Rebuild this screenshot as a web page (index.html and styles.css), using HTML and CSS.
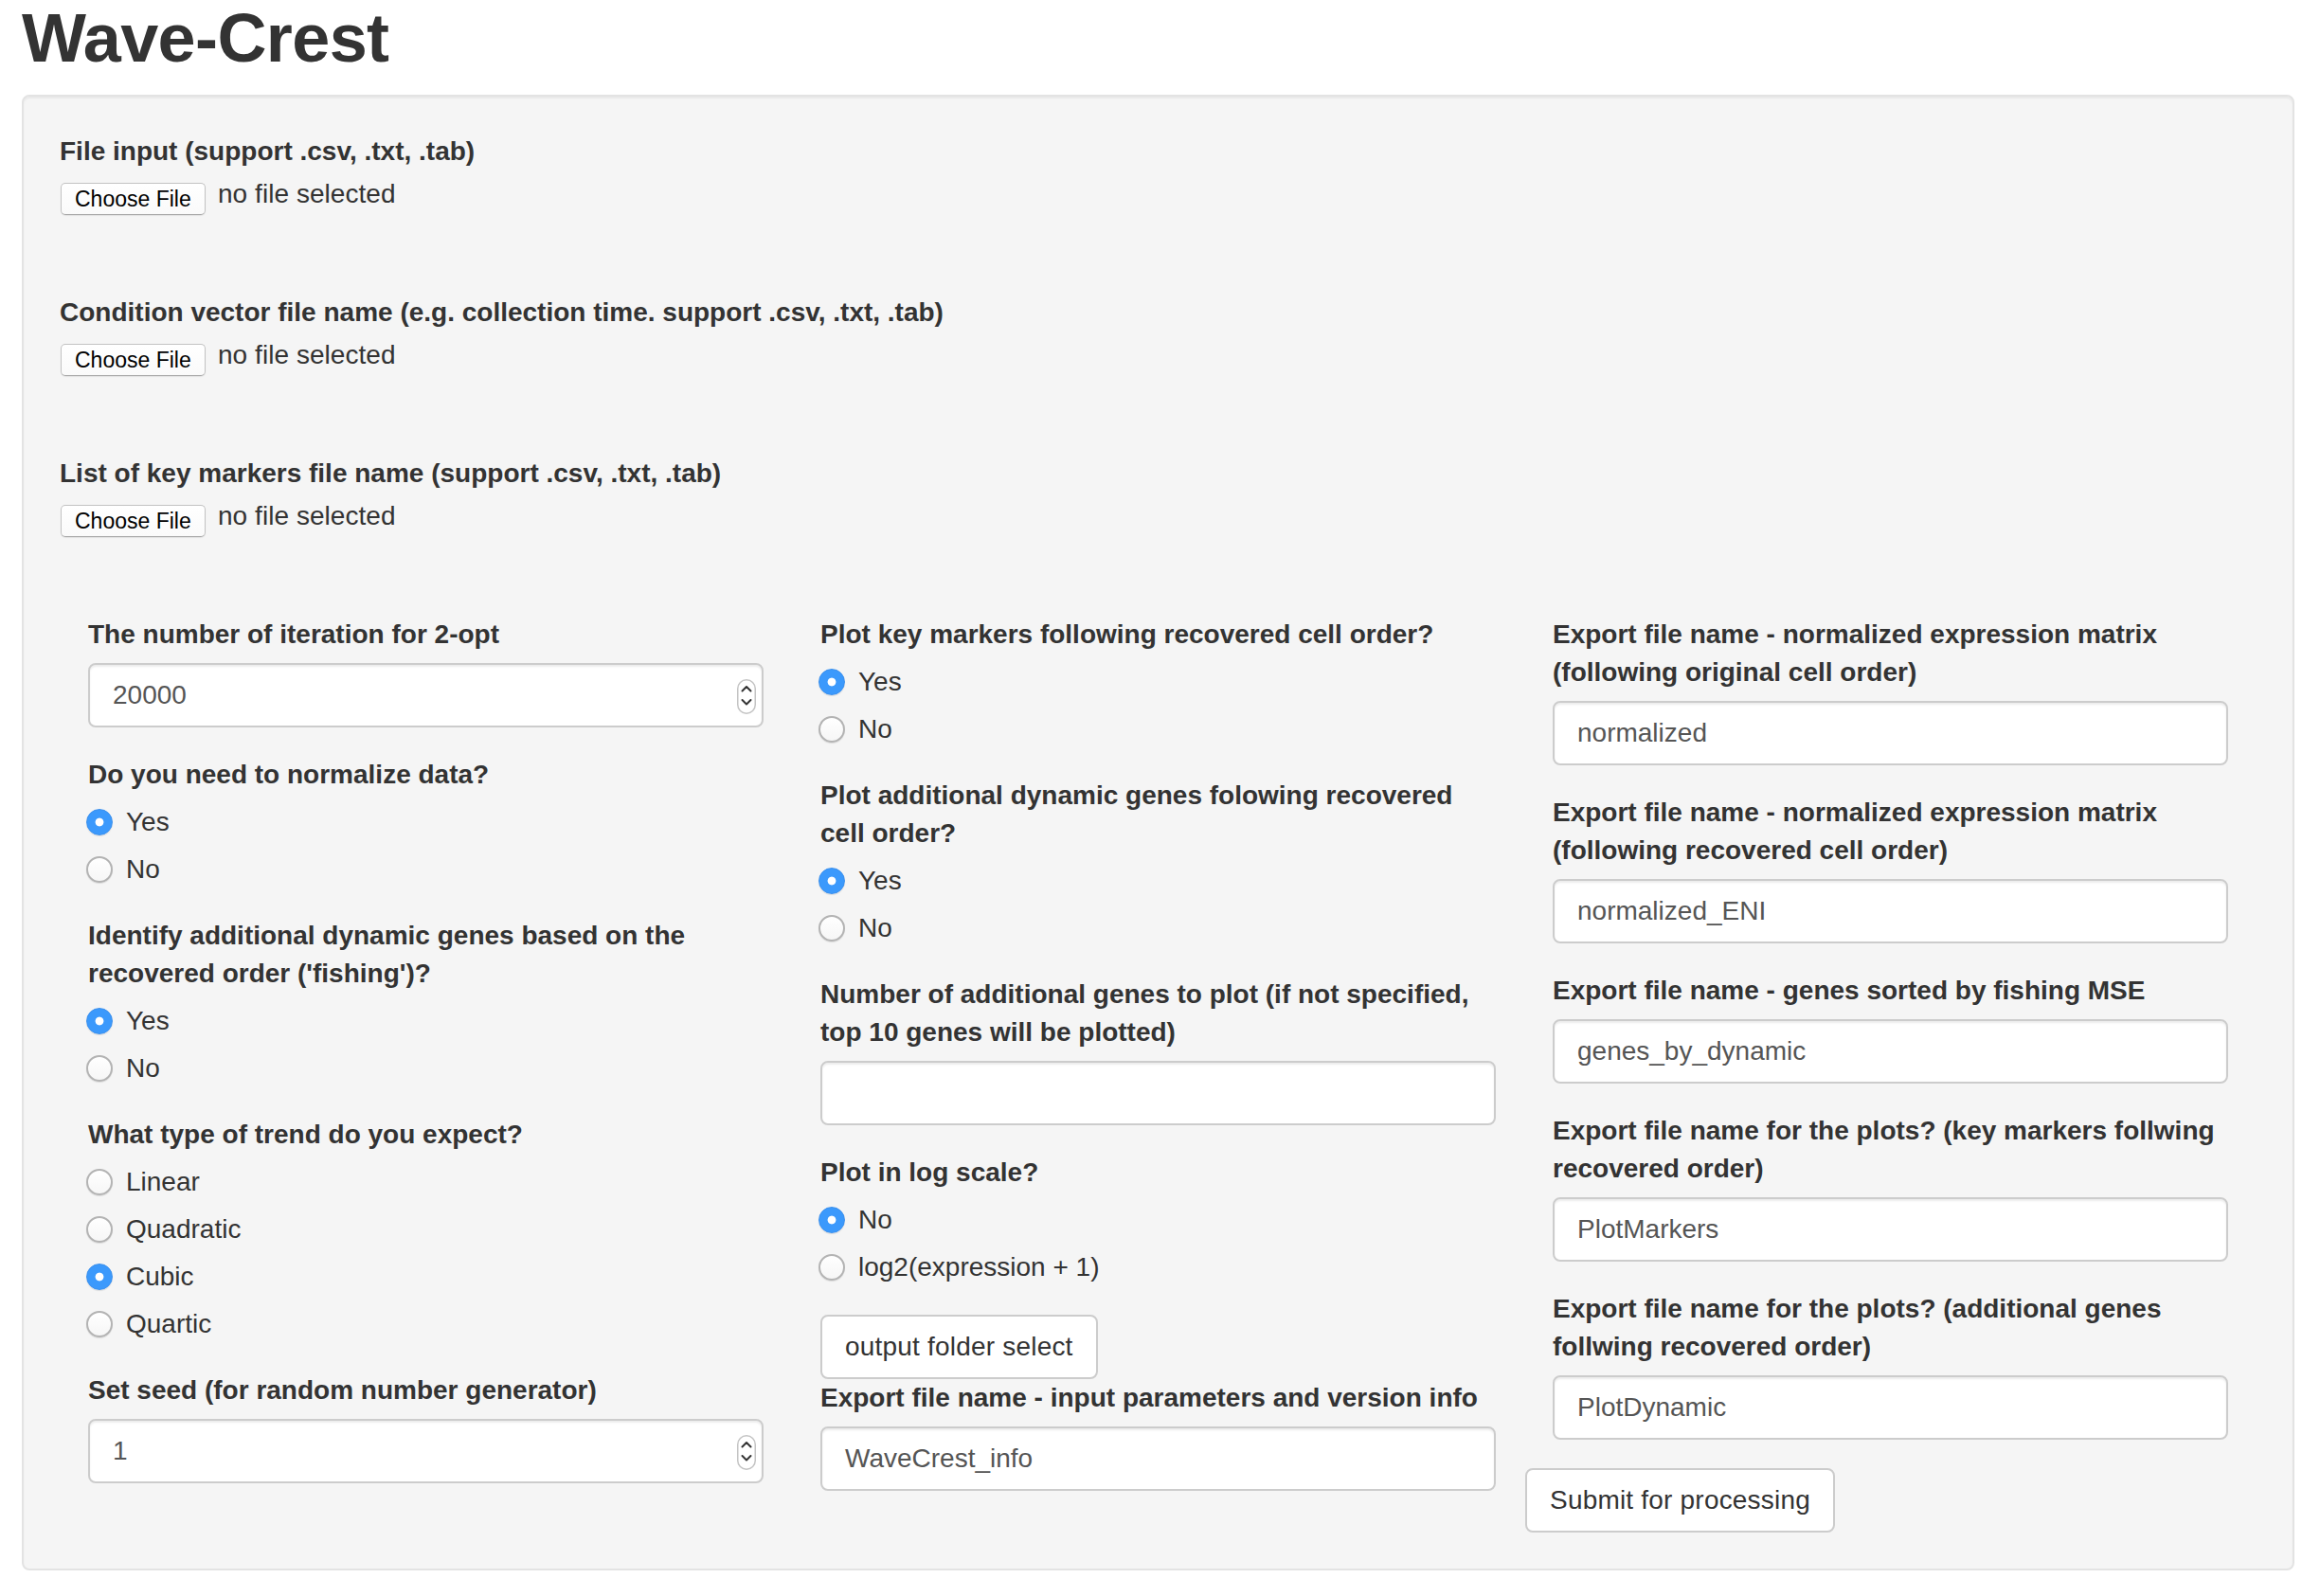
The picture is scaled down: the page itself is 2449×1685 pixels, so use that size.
FILE: index.html
```html
<!DOCTYPE html>
<html lang="en">
<head>
<meta charset="utf-8">
<title>Wave-Crest</title>
<link rel="stylesheet" href="styles.css">
</head>
<body>
<div class="page">
  <h1 class="title">Wave-Crest</h1>
  <form class="well">
    <div class="file-group">
      <label class="control-label">File input (support .csv, .txt, .tab)</label>
      <div class="file-row"><span class="file-btn">Choose File</span><span class="file-status">no file selected</span></div>
    </div>
    <div class="file-group">
      <label class="control-label">Condition vector file name (e.g. collection time. support .csv, .txt, .tab)</label>
      <div class="file-row"><span class="file-btn">Choose File</span><span class="file-status">no file selected</span></div>
    </div>
    <div class="file-group">
      <label class="control-label">List of key markers file name (support .csv, .txt, .tab)</label>
      <div class="file-row"><span class="file-btn">Choose File</span><span class="file-status">no file selected</span></div>
    </div>

    <div class="columns">
      <div class="col">
        <div class="form-group">
          <label class="control-label">The number of iteration for 2-opt</label>
          <div class="form-control number"><span>20000</span><span class="spinner"><svg width="20" height="37" viewBox="0 0 20 37"><rect x="0.75" y="0.75" width="18.5" height="35.5" rx="9.25" fill="#fff" stroke="#c4c4c4" stroke-width="1.5"/><polyline points="5.5,12.5 10,8 14.5,12.5" fill="none" stroke="#333" stroke-width="2" stroke-linecap="round" stroke-linejoin="round"/><polyline points="5.5,22 10,26.5 14.5,22" fill="none" stroke="#333" stroke-width="2" stroke-linecap="round" stroke-linejoin="round"/></svg></span></div>
        </div>
        <div class="form-group">
          <label class="control-label">Do you need to normalize data?</label>
          <div class="options">
            <div class="radio"><span class="dot checked"></span><span>Yes</span></div>
            <div class="radio"><span class="dot"></span><span>No</span></div>
          </div>
        </div>
        <div class="form-group">
          <label class="control-label">Identify additional dynamic genes based on the recovered order ('fishing')?</label>
          <div class="options">
            <div class="radio"><span class="dot checked"></span><span>Yes</span></div>
            <div class="radio"><span class="dot"></span><span>No</span></div>
          </div>
        </div>
        <div class="form-group">
          <label class="control-label">What type of trend do you expect?</label>
          <div class="options">
            <div class="radio"><span class="dot"></span><span>Linear</span></div>
            <div class="radio"><span class="dot"></span><span>Quadratic</span></div>
            <div class="radio"><span class="dot checked"></span><span>Cubic</span></div>
            <div class="radio"><span class="dot"></span><span>Quartic</span></div>
          </div>
        </div>
        <div class="form-group">
          <label class="control-label">Set seed (for random number generator)</label>
          <div class="form-control number"><span>1</span><span class="spinner"><svg width="20" height="37" viewBox="0 0 20 37"><rect x="0.75" y="0.75" width="18.5" height="35.5" rx="9.25" fill="#fff" stroke="#c4c4c4" stroke-width="1.5"/><polyline points="5.5,12.5 10,8 14.5,12.5" fill="none" stroke="#333" stroke-width="2" stroke-linecap="round" stroke-linejoin="round"/><polyline points="5.5,22 10,26.5 14.5,22" fill="none" stroke="#333" stroke-width="2" stroke-linecap="round" stroke-linejoin="round"/></svg></span></div>
        </div>
      </div>

      <div class="col">
        <div class="form-group">
          <label class="control-label">Plot key markers following recovered cell order?</label>
          <div class="options">
            <div class="radio"><span class="dot checked"></span><span>Yes</span></div>
            <div class="radio"><span class="dot"></span><span>No</span></div>
          </div>
        </div>
        <div class="form-group">
          <label class="control-label">Plot additional dynamic genes folowing recovered cell order?</label>
          <div class="options">
            <div class="radio"><span class="dot checked"></span><span>Yes</span></div>
            <div class="radio"><span class="dot"></span><span>No</span></div>
          </div>
        </div>
        <div class="form-group">
          <label class="control-label">Number of additional genes to plot (if not specified, top 10 genes will be plotted)</label>
          <div class="form-control"><span></span></div>
        </div>
        <div class="form-group">
          <label class="control-label">Plot in log scale?</label>
          <div class="options">
            <div class="radio"><span class="dot checked"></span><span>No</span></div>
            <div class="radio"><span class="dot"></span><span>log2(expression + 1)</span></div>
          </div>
        </div>
        <div class="btn-wrap"><span class="btn">output folder select</span></div>
        <div class="form-group">
          <label class="control-label">Export file name - input parameters and version info</label>
          <div class="form-control"><span>WaveCrest_info</span></div>
        </div>
      </div>

      <div class="col">
        <div class="form-group">
          <label class="control-label">Export file name - normalized expression matrix (following original cell order)</label>
          <div class="form-control"><span>normalized</span></div>
        </div>
        <div class="form-group">
          <label class="control-label">Export file name - normalized expression matrix (following recovered cell order)</label>
          <div class="form-control"><span>normalized_ENI</span></div>
        </div>
        <div class="form-group">
          <label class="control-label">Export file name - genes sorted by fishing MSE</label>
          <div class="form-control"><span>genes_by_dynamic</span></div>
        </div>
        <div class="form-group">
          <label class="control-label">Export file name for the plots? (key markers follwing recovered order)</label>
          <div class="form-control"><span>PlotMarkers</span></div>
        </div>
        <div class="form-group">
          <label class="control-label">Export file name for the plots? (additional genes follwing recovered order)</label>
          <div class="form-control"><span>PlotDynamic</span></div>
        </div>
        <div class="btn-wrap submit-wrap"><span class="btn">Submit for processing</span></div>
      </div>
    </div>
  </form>
</div>
</body>
</html>
```

FILE: styles.css
```css
* { box-sizing: border-box; }

html, body {
  margin: 0;
  padding: 0;
  background: #fff;
}

body {
  font-family: "Liberation Sans", Arial, Helvetica, sans-serif;
  font-size: 28px;
  line-height: 40px;
  color: #333;
}

.page {
  padding: 1px 27px 0 23px;
}

.title {
  margin: 0 0 20px;
  font-size: 72px;
  line-height: 79px;
  font-weight: 700;
  color: #333;
  letter-spacing: -0.6px;
}

.well {
  display: block;
  margin: 0;
  padding: 38px;
  background: #f5f5f5;
  border: 2px solid #e3e3e3;
  border-radius: 8px;
  box-shadow: inset 0 2px 2px rgba(0, 0, 0, 0.05);
}

.control-label {
  display: block;
  font-weight: 700;
  line-height: 40px;
  margin: 0 0 10px;
}

.file-group {
  height: 170px;
}

.file-row {
  display: flex;
  align-items: center;
  height: 40px;
}

.file-btn {
  display: block;
  width: 153px;
  height: 34px;
  margin-left: 1px;
  padding-left: 14px;
  font-size: 23px;
  line-height: 32px;
  color: #000;
  background: linear-gradient(#ffffff, #fafafa);
  border: 1px solid #c3c3c3;
  border-bottom-color: #a8a8a8;
  border-radius: 5px;
  box-shadow: 0 1px 1px rgba(0, 0, 0, 0.08);
  white-space: nowrap;
}

.file-status {
  align-self: flex-start;
  margin-top: -5px;
  margin-left: 13px;
  color: #333;
  letter-spacing: 0.05px;
}

.columns {
  display: grid;
  grid-template-columns: repeat(3, 1fr);
}

.col {
  padding: 0 30px;
  min-width: 0;
}

.form-group {
  margin-bottom: 30px;
}

.form-control {
  display: flex;
  align-items: center;
  justify-content: space-between;
  width: 100%;
  height: 68px;
  padding: 12px 6px 12px 24px;
  font-size: 28px;
  line-height: 40px;
  color: #555;
  background: #fff;
  border: 2px solid #ccc;
  border-radius: 8px;
  box-shadow: inset 0 2px 2px rgba(0, 0, 0, 0.075);
}

.spinner {
  display: block;
  width: 20px;
  height: 37px;
  margin-top: 3px;
}

.spinner svg {
  display: block;
}

.options {
  display: block;
}

.radio {
  display: flex;
  align-items: center;
  height: 40px;
  margin-bottom: 10px;
  color: #333;
}

.dot {
  flex: none;
  width: 28px;
  height: 28px;
  margin-left: -2px;
  margin-right: 14px;
  border-radius: 50%;
  border: 2px solid #b3b3b3;
  background: linear-gradient(#ffffff, #f6f6f6);
  box-shadow: 0 1px 1px rgba(0, 0, 0, 0.1);
}

.dot.checked {
  border: 1px solid #3a8fed;
  background: radial-gradient(circle, #ffffff 0, #ffffff 4px, #3b99fc 4.8px, #3b99fc 100%);
  box-shadow: 0 1px 1px rgba(0, 0, 0, 0.1);
}

.btn-wrap {
  display: flex;
}

.btn {
  display: block;
  padding: 12px 24px;
  font-size: 28px;
  line-height: 40px;
  color: #333;
  background: #fff;
  border: 2px solid #ccc;
  border-radius: 8px;
  white-space: nowrap;
  letter-spacing: 0.2px;
}

.submit-wrap {
  margin-left: -29px;
}
```
